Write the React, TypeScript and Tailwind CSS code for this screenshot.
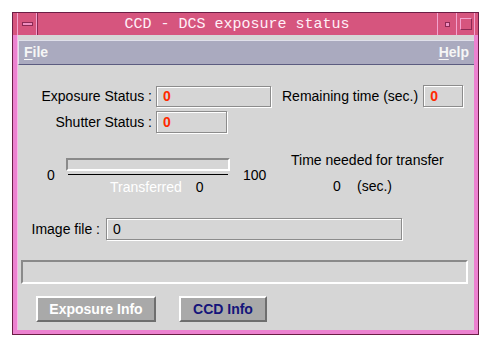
import React from 'react';

const sans = "font-['Liberation_Sans',Arial,sans-serif]";

// grooved text field used for the status values
const Field: React.FC<{ w: string; value: string; red?: boolean; h?: string }> = ({ w, value, red, h = 'h-[22px]' }) => (
  <div
    className={`${w} ${h} border border-[#8c8c8c] shadow-[inset_1px_1px_0_#ffffff,1px_1px_0_#ffffff] flex items-center pl-[6px] text-[14px] leading-none ${
      red ? 'text-[#ff2a00] font-bold' : 'text-black'
    }`}
  >
    {value}
  </div>
);

const TitleBar: React.FC = () => (
  <div className="h-[22px] flex bg-[#d6557e] shrink-0">
    <div className="w-[5px] border-r border-[#f3a3cf]" />
    <div className="w-[19px] border-r border-[#f3a3cf] shadow-[1px_0_0_#8c2a54] flex items-center justify-center">
      <div className="w-[11px] h-[4px] bg-[#ef8fc0] border border-[#8c2a54]" />
    </div>
    <div className="flex-1 flex items-center justify-center font-['Liberation_Mono',monospace] text-[15px] text-[#fff0f8] leading-none">
      CCD - DCS exposure status
    </div>
    <div className="w-[19px] border-l border-[#f3a3cf] flex items-center justify-center">
      <div className="w-[5px] h-[5px] bg-[#ef8fc0] border border-[#8c2a54]" />
    </div>
    <div className="w-[18px] border-l border-[#f3a3cf] flex items-center justify-center">
      <div className="w-[12px] h-[12px] border border-t-[#f3a3cf] border-l-[#f3a3cf] border-r-[#8c2a54] border-b-[#8c2a54]" />
    </div>
    <div className="w-[4px] border-l border-[#f3a3cf]" />
  </div>
);

export default function App() {
  return (
    <div className={`w-[491px] h-[347px] bg-white overflow-hidden ${sans}`}>
      <div className="ml-[12px] mt-[12px] w-[467px] h-[323px] border border-[#6b1d45] bg-[#ec82d0] flex flex-col">
        <TitleBar />

        <div className="flex-1 mx-[4px] mb-[4px] bg-[#d6d6d6] flex flex-col border-l border-[#f7b8e8]">
          {/* menu bar */}
          <div className="mt-[5px] h-[25px] bg-[#aaaabf] border-t border-l border-[#e0e0ea] border-b border-b-[#5c5c80] flex items-center justify-between px-[5px] text-[14px] font-bold text-[#f6f6f6]">
            <span>
              <span className="underline underline-offset-2">F</span>ile
            </span>
            <span>
              <span className="underline underline-offset-2">H</span>elp
            </span>
          </div>

          {/* exposure + remaining */}
          <div className="mt-[20px] flex items-center h-[22px] text-[14px] text-black">
            <div className="w-[138px] text-right pr-[4px]">Exposure Status :</div>
            <Field w="w-[115px]" h="h-[21px]" value="0" red />
            <div className="ml-[11px]">Remaining time (sec.)</div>
            <div className="ml-[5px]">
              <Field w="w-[40px]" value="0" red />
            </div>
          </div>

          {/* shutter */}
          <div className="mt-[4px] flex items-center h-[22px] text-[14px] text-black">
            <div className="w-[138px] text-right pr-[4px]">Shutter Status :</div>
            <Field w="w-[71px]" value="0" red />
          </div>

          {/* transfer scale */}
          <div className="mt-[19px] flex text-[14px] leading-[16px] text-black">
            <div className="w-[262px] mt-[6px] flex items-start">
              <div className="ml-[29px] mt-[9px] w-[8px]">0</div>
              <div className="ml-[11px] w-[164px] flex flex-col">
                <div className="h-[13px] border-t-2 border-l-2 border-[#8a8a8a] border-b-2 border-r-2 border-b-white border-r-white bg-[#d6d6d6]" />
                <div className="mt-[3px] mx-[2px] h-[1px] bg-black" />
                <div className="mt-[4px] pl-[44px] flex">
                  <span className="text-white">Transferred</span>
                  <span className="ml-[14px]">0</span>
                </div>
              </div>
              <div className="ml-[13px] mt-[9px]">100</div>
            </div>
            <div className="ml-[11px] flex flex-col">
              <div>Time needed for transfer</div>
              <div className="mt-[10px] flex">
                <span className="ml-[42px] w-[8px]">0</span>
                <span className="ml-[16px]">(sec.)</span>
              </div>
            </div>
          </div>

          {/* image file */}
          <div className="mt-[23px] flex items-center h-[22px] text-[14px] text-black">
            <div className="w-[88px] text-right pr-[6px]">Image file :</div>
            <Field w="w-[296px]" value="0" />
          </div>

          {/* status line */}
          <div className="mt-[20px] ml-[3px] w-[447px] h-[24px] border-t-2 border-l-2 border-[#8a8a8a] border-b-2 border-r-2 border-b-white border-r-white" />

          {/* buttons */}
          <div className="mt-[12px] flex text-[14px] font-bold">
            <button className="ml-[18px] w-[120px] h-[26px] bg-[#a9a9a9] border-t-2 border-l-2 border-white border-b-2 border-r-2 border-b-[#6e6e6e] border-r-[#6e6e6e] text-white">
              Exposure Info
            </button>
            <button className="ml-[23px] w-[88px] h-[26px] bg-[#a9a9a9] border-t-2 border-l-2 border-white border-b-2 border-r-2 border-b-[#6e6e6e] border-r-[#6e6e6e] text-[#14147a]">
              CCD Info
            </button>
          </div>
        </div>
      </div>
    </div>
  );
}
